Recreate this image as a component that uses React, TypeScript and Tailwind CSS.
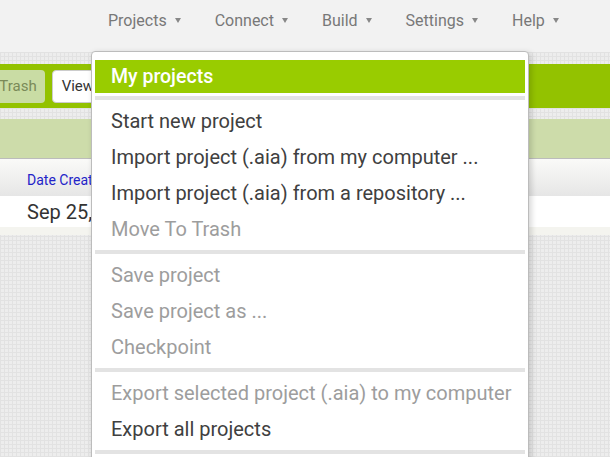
const navItems = ["Projects", "Connect", "Build", "Settings", "Help"];

type MenuItem = { label: string; disabled?: boolean };

const groups: MenuItem[][] = [
  [
    { label: "Start new project" },
    { label: "Import project (.aia) from my computer ..." },
    { label: "Import project (.aia) from a repository ..." },
    { label: "Move To Trash", disabled: true },
  ],
  [
    { label: "Save project", disabled: true },
    { label: "Save project as ...", disabled: true },
    { label: "Checkpoint", disabled: true },
  ],
  [
    { label: "Export selected project (.aia) to my computer", disabled: true },
    { label: "Export all projects" },
  ],
];

const Separator = () => <div className="h-[4px] my-[3px] bg-[#e3e3e3]" />;

const ProjectsMenu = () => {
  return (
    <div className="absolute left-[91px] top-[51px] w-[438px] h-[440px] bg-white border border-[#bcbcbc] rounded-[4px] shadow-[2px_2px_6px_rgba(0,0,0,0.18)] pt-[8px] px-[3px]">
      <div className="h-[33px] bg-[#99cc00] text-white flex items-center pl-4 text-[19.5px] font-medium">My projects</div>
      {groups.map((group, gi) => (
        <div key={gi}>
          <Separator />
          {group.map((item) => (
            <div
              key={item.label}
              className={`h-9 flex items-center pl-4 text-[20px] ${item.disabled ? "text-[#9d9d9d]" : "text-[#404040]"}`}
            >
              {item.label}
            </div>
          ))}
        </div>
      ))}
      <Separator />
    </div>
  );
};

export default function App() {
  return (
    <div
      className="relative w-[610px] h-[457px] overflow-hidden bg-[#ededed] [background-image:repeating-linear-gradient(0deg,#e2e2e2_0,#e2e2e2_1px,transparent_1px,transparent_4px),repeating-linear-gradient(90deg,#e2e2e2_0,#e2e2e2_1px,transparent_1px,transparent_4px)]"
      style={{ fontFamily: "Roboto, 'Liberation Sans', sans-serif" }}
    >
      <div className="h-[52px] bg-[#f2f2f2] flex items-center pb-[11px] pl-[108px] gap-[34px] text-[16px] text-[#787878]">
        {navItems.map((n) => (
          <div key={n} className="flex items-center gap-[8px]">
            <span>{n}</span>
            <span className="w-0 h-0 border-x-[3.5px] border-x-transparent border-t-[5px] border-t-[#888]" />
          </div>
        ))}
      </div>

      <div className="mt-[12px] h-[44px] bg-[#93c200] flex items-center gap-[7px]">
        <button className="-ml-[71px] h-[33px] pl-[10px] pr-[8px] rounded-[4px] bg-[#c9dca4] text-[#7a8a58] text-[15px]">
          Move To Trash
        </button>
        <button className="h-[33px] px-[9px] rounded-[4px] bg-white border border-[#cccccc] text-[#333] text-[15px]">
          View Trash
        </button>
      </div>

      <div className="mt-[11px] h-[39px] bg-[#cddcaa]" />
      <div className="h-[38px] bg-[linear-gradient(#fafaf8,#e6e6e6)] border-t border-[#bcbcbc] flex items-end pl-[27px] pb-[5px]">
        <span className="text-[14px] text-[#2323c8]">Date Created</span>
      </div>
      <div className="h-[31px] bg-white flex items-center pl-[27px] text-[20px] text-[#333]">Sep 25, 2019</div>
      <div className="h-[8px] bg-[#f4f4ef]" />

      <ProjectsMenu />
    </div>
  );
}
